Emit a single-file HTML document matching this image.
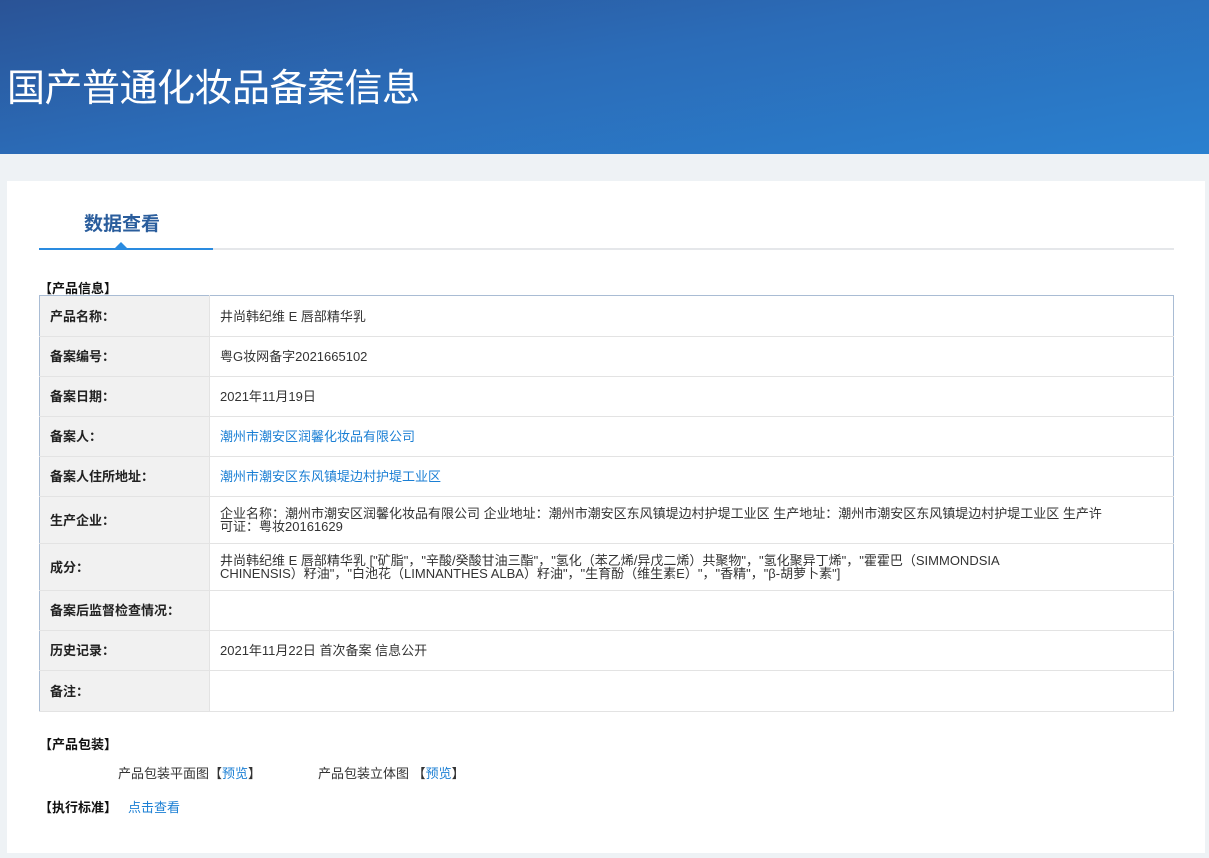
<!DOCTYPE html>
<html><head><meta charset="utf-8"><style>
*{margin:0;padding:0;box-sizing:border-box}
body{width:1209px;height:858px;background:#eef2f5;font-family:"Liberation Sans","Noto Sans CJK SC",sans-serif;font-size:13px;color:#333;overflow:hidden;position:relative}
.banner{position:absolute;left:0;top:0;width:1209px;height:154px;background:linear-gradient(170deg,#2a5396 0%,#2b6cb8 45%,#2a80cf 100%);overflow:hidden}
.banner h1{position:absolute;left:7px;top:57px;font-size:38px;font-weight:normal;color:#fff;letter-spacing:-0.5px}
.card{position:absolute;left:7px;top:181px;width:1198px;height:672px;background:#fff}
.tab{position:absolute;left:77px;top:28px;font-size:19px;font-weight:bold;color:#2a5d9c}
.line{position:absolute;left:32px;top:67px;width:1135px;height:2px;background:#e5e7ea}
.line2{position:absolute;left:32px;top:67px;width:174px;height:2px;background:#2a8be0}
.tri{position:absolute;left:107px;top:61px;width:0;height:0;border-left:7px solid transparent;border-right:7px solid transparent;border-bottom:7px solid #2a8be0}
.sec{position:absolute;font-weight:bold;color:#111;font-size:13px}
table{position:absolute;left:32px;top:114px;width:1135px;border-collapse:collapse;border:1px solid #a9bcd4}
td{border-bottom:1px solid #e3e3e3;padding:0 10px;vertical-align:middle;line-height:13px}
td.l{width:170px;background:#f1f1f1;font-weight:bold;color:#222;border-right:1px solid #e3e3e3}
a{color:#1b7fd4;text-decoration:none}
</style></head><body>
<div class="banner"><h1>国产普通化妆品备案信息</h1></div>
<div class="card">
<div class="tab">数据查看</div>
<div class="line"></div><div class="line2"></div><div class="tri"></div>
<div class="sec" style="left:32px;top:97px">【产品信息】</div>
<table>
<tr style="height:41px"><td class="l">产品名称：</td><td>井尚韩纪维 E 唇部精华乳</td></tr>
<tr style="height:40px"><td class="l">备案编号：</td><td>粤G妆网备字2021665102</td></tr>
<tr style="height:40px"><td class="l">备案日期：</td><td>2021年11月19日</td></tr>
<tr style="height:40px"><td class="l">备案人：</td><td><a>潮州市潮安区润馨化妆品有限公司</a></td></tr>
<tr style="height:40px"><td class="l">备案人住所地址：</td><td><a>潮州市潮安区东风镇堤边村护堤工业区</a></td></tr>
<tr style="height:47px"><td class="l">生产企业：</td><td style="padding-right:60px">企业名称：潮州市潮安区润馨化妆品有限公司 企业地址：潮州市潮安区东风镇堤边村护堤工业区 生产地址：潮州市潮安区东风镇堤边村护堤工业区 生产许可证：粤妆20161629</td></tr>
<tr style="height:47px"><td class="l">成分：</td><td style="padding-right:120px">井尚韩纪维 E 唇部精华乳 ["矿脂"，"辛酸/癸酸甘油三酯"，"氢化（苯乙烯/异戊二烯）共聚物"，"氢化聚异丁烯"，"霍霍巴（SIMMONDSIA CHINENSIS）籽油"，"白池花（LIMNANTHES ALBA）籽油"，"生育酚（维生素E）"，"香精"，"β-胡萝卜素"]</td></tr>
<tr style="height:40px"><td class="l">备案后监督检查情况：</td><td></td></tr>
<tr style="height:40px"><td class="l">历史记录：</td><td>2021年11月22日 首次备案 信息公开</td></tr>
<tr style="height:41px"><td class="l">备注：</td><td></td></tr>
</table>
<div class="sec" style="left:32px;top:553px">【产品包装】</div>
<div style="position:absolute;left:111px;top:582px">产品包装平面图【<a>预览</a>】</div>
<div style="position:absolute;left:311px;top:582px">产品包装立体图 【<a>预览</a>】</div>
<div class="sec" style="left:32px;top:616px">【执行标准】</div>
<div style="position:absolute;left:121px;top:616px"><a>点击查看</a></div>
</div>
</body></html>
